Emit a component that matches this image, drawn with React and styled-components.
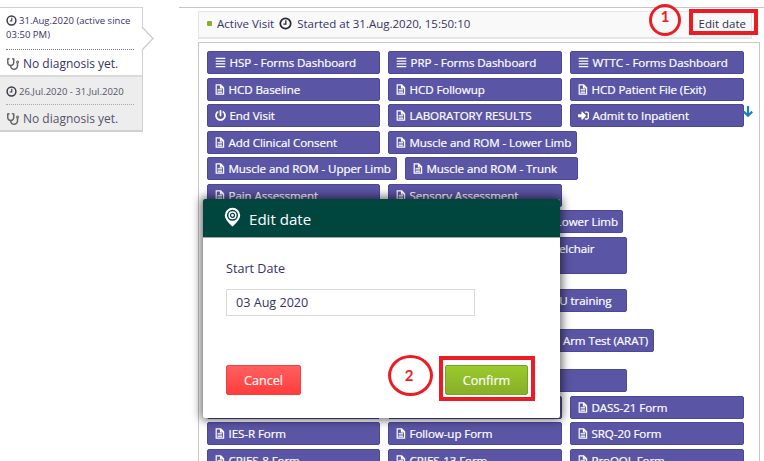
import React from "react";
import styled, { createGlobalStyle, css } from "styled-components";
import { FaAlignJustify, FaPowerOff, FaSignInAlt, FaStethoscope } from "react-icons/fa";

const GlobalStyle = createGlobalStyle`
  * { box-sizing: border-box; }
  body {
    margin: 0;
    background: #fff;
    color: #363463;
    font-family: "Open Sans", sans-serif;
    overflow: hidden;
  }
`;

const Page = styled.div`
  position: relative;
  display: flex;
  align-items: flex-start;
  width: 764px;
  height: 461px;
  padding-top: 7px;
  overflow: hidden;
`;

const Sidebar = styled.aside`
  position: relative;
  flex: 0 0 143px;
  margin-right: 36px;
  height: 125px;
  border: solid #d0d0d0;
  border-width: 1px 1px 2px 0;
`;

const VisitEntry = styled.section`
  height: ${(p) => (p.$past ? 55 : 67)}px;
  padding: ${(p) => (p.$past ? 8 : 6)}px 8px 0 6px;
  background: ${(p) => (p.$past ? "#ededed" : "#fff")};
  color: ${(p) => (p.$past ? "#55546a" : "#363463")};
  ${(p) => p.$past && css`border-top: 2px solid #dadada;`}
`;

const VisitDate = styled.div`
  height: ${(p) => (p.$past ? 20 : 36)}px;
  border-bottom: ${(p) => (p.$past ? "1px dotted #aaa" : "1px dotted #777")};
  font-size: 9.5px;
  line-height: 14.3px;
  letter-spacing: ${(p) => p.$spacing}px;
  white-space: nowrap;
  svg {
    width: 11px;
    height: 11px;
    margin-right: 2px;
    vertical-align: -2px;
    color: #3b3b48;
  }
`;

const Diagnosis = styled.div`
  display: flex;
  align-items: center;
  height: 27px;
  padding-left: 1px;
  font-size: 12px;
  white-space: nowrap;
  svg {
    width: 12px;
    height: 12px;
    margin-right: 4px;
    color: #666;
  }
`;

const SidebarPointer = styled.svg`
  position: absolute;
  left: 141px;
  top: 18px;
  width: 14px;
  height: 25px;
`;

const Main = styled.main`
  flex: 1;
  height: 454px;
  padding: 3px 4px 0 19px;
  border-top: 1px solid #c5c5c5;
`;

const VisitHeader = styled.header`
  display: flex;
  align-items: center;
  width: 554px;
  height: 28px;
  padding: 0 5px 2px 8px;
  border: 1px solid #e6e6e6;
  border-bottom-width: 2px;
  background: #f9f9f9;
  font-size: 11.5px;
  white-space: nowrap;
  svg {
    width: 13px;
    height: 13px;
    margin: 0 5px;
    color: #282833;
  }
`;

const ActiveDot = styled.i`
  width: 5px;
  height: 5px;
  margin-right: 5px;
  border-radius: 1px;
  background: #88af28;
`;

const EditLink = styled.a`
  margin-left: auto;
  color: #303047;
`;

const FormsPanel = styled.section`
  position: relative;
  width: 562px;
  height: 440px;
  margin-top: 3px;
  padding: 8px 0 0 8px;
  border: 1px solid #c8c8c8;
  border-bottom: 0;
`;

const FormRow = styled.div`
  display: flex;
  align-items: flex-start;
  gap: 8px;
  height: ${(p) => p.$height}px;
`;

const FormButton = styled.button`
  flex: none;
  display: flex;
  align-items: center;
  justify-content: ${(p) => (p.$end ? "flex-end" : "flex-start")};
  width: ${(p) => p.$width}px;
  height: ${(p) => (p.$tall ? 37.5 : 23)}px;
  padding: 0 ${(p) => (p.$end || 0)}px ${(p) => (p.$tall ? 14 : 0)}px ${(p) => (p.$end ? 0 : 6.5)}px;
  border: 1px solid #4d4798;
  border-radius: 2px;
  background: #5b55a5;
  color: #fff;
  font: 11.6px "Open Sans", sans-serif;
  -webkit-text-stroke: 0.2px #fff;
  letter-spacing: -0.09px;
  white-space: nowrap;
  svg {
    flex: none;
    height: 11px;
    margin-right: 4px;
  }
`;

const ScrollArrow = styled.svg`
  position: absolute;
  left: 544px;
  top: 63px;
  width: 10px;
  height: 12px;
`;

const Dialog = styled.section`
  position: absolute;
  left: 203px;
  top: 199px;
  width: 357px;
  height: 219px;
  background: #fff;
  border-radius: 2px;
  box-shadow: 0 0 10px 2px rgba(0, 0, 0, 0.6);
`;

const DialogTitle = styled.h3`
  display: flex;
  align-items: center;
  height: 39px;
  margin: 0;
  padding: 2px 0 0 21px;
  border-bottom: 1px solid #a5a5a5;
  border-radius: 2px 2px 0 0;
  background: #00463f;
  color: #fff;
  font-size: 15.1px;
  font-weight: 400;
  svg {
    width: 17px;
    height: 20px;
    margin: -5px 8px 0 0;
  }
`;

const DialogBody = styled.div`
  padding: 22px 24px 0 23px;
`;

const FieldLabel = styled.label`
  display: block;
  height: 29px;
  font-size: 12.6px;
  line-height: 18px;
`;

const DateInput = styled.div`
  width: 249px;
  height: 27px;
  padding-left: 9px;
  border: 1px solid #d9d9d9;
  font-size: 12.6px;
  line-height: 25px;
`;

const Actions = styled.div`
  display: flex;
  justify-content: space-between;
  width: 302px;
  margin-top: 49px;
`;

const ActionButton = styled.button`
  width: ${(p) => (p.$confirm ? 83 : 75)}px;
  height: 30px;
  padding: 0;
  border: 1px solid ${(p) => (p.$confirm ? "#78a521" : "#f04141")};
  border-radius: 2px;
  background: ${(p) =>
    p.$confirm ? "linear-gradient(#9aca2d, #88af28)" : "linear-gradient(#ff6060, #ff3d3d)"};
  color: #fff;
  font: 12.6px "Open Sans", sans-serif;
  -webkit-text-stroke: 0.15px #fff;
`;

const Highlight = styled.div`
  position: absolute;
  left: ${(p) => p.$x}px;
  top: ${(p) => p.$y}px;
  width: ${(p) => p.$w}px;
  height: ${(p) => p.$h}px;
  border: 4px solid #ed1c24;
`;

const StepMarker = styled(Highlight)`
  display: flex;
  justify-content: center;
  padding-top: ${(p) => p.$shift}px;
  padding-right: ${(p) => p.$nudge || 0}px;
  border-width: 3px;
  border-radius: 50%;
  color: #ed1c24;
  font: bold 15px/18px Lato, sans-serif;
`;

const FileIcon = () => (
  <svg width="10" height="11" viewBox="0 0 10 11" fill="none" stroke="currentColor">
    <path d="M1.2.8h4.5l2.9 3v6.4H1.2zM5.5.8v3.1h3.1" strokeWidth="1.2" />
    <path d="M2.6 5.4h4.6M2.6 7h4.6M2.6 8.6h4.6" strokeWidth=".9" />
  </svg>
);

const ClockIcon = () => (
  <svg viewBox="0 0 12 12" fill="none" stroke="currentColor" strokeWidth="1.6">
    <circle cx="6" cy="6" r="4.8" />
    <path d="M6.3 3v3.5H4" strokeWidth="1.2" />
  </svg>
);

const MarkerIcon = () => (
  <svg viewBox="0 0 17 20">
    <path d="M8.5.8A7.7 7.7 0 0 0 .8 8.4C.8 13 8.5 19.5 8.5 19.5S16.2 13 16.2 8.4A7.7 7.7 0 0 0 8.5.8Z" fill="#fff" />
    <circle cx="8.5" cy="8.3" r="4.8" fill="none" stroke="#00463f" strokeWidth="1.5" />
    <circle cx="8.5" cy="8.3" r="2" fill="none" stroke="#00463f" strokeWidth="1.2" />
  </svg>
);

const icons = {
  file: <FileIcon />,
  bars: <FaAlignJustify size={11} />,
  power: <FaPowerOff size={11} />,
  enter: <FaSignInAlt size={11} />,
};

const form = (label, width, icon = "file") => ({ label, width, icon });

const rows = [
  { height: 26.5, items: [form("HSP - Forms Dashboard", 173, "bars"), form("PRP - Forms Dashboard", 174, "bars"), form("WTTC - Forms Dashboard", 174, "bars")] },
  { height: 26.5, items: [form("HCD Baseline", 173), form("HCD Followup", 174), form("HCD Patient File (Exit)", 174)] },
  { height: 26.5, items: [form("End Visit", 173, "power"), form("LABORATORY RESULTS", 174), form("Admit to Inpatient", 174, "enter")] },
  { height: 26.5, items: [form("Add Clinical Consent", 173), form("Muscle and ROM - Lower Limb", 189)] },
  { height: 26.5, items: [form("Muscle and ROM - Upper Limb", 190), form("Muscle and ROM - Trunk", 173)] },
  { height: 26.5, items: [form("Pain Assessment", 173), form("Sensory Assessment", 174)] },
  { height: 26.5, items: [{ ...form("Lower Limb", 416), end: 4 }] },
  { height: 52, items: [{ ...form("Wheelchair", 419.5), end: 31, tall: true }] },
  { height: 40.5, items: [{ ...form("ICU training", 419.5), end: 14 }] },
  { height: 40, items: [{ ...form("Arm Test (ARAT)", 447), end: 5 }] },
  { height: 26.5, items: [{ ...form("", 419.5), end: 5 }] },
  { height: 26.5, items: [form("", 173), form("", 174), form("DASS-21 Form", 174)] },
  { height: 26.5, items: [form("IES-R Form", 173), form("Follow-up Form", 174), form("SRQ-20 Form", 174)] },
  { height: 26.5, items: [form("CRIES-8 Form", 173), form("CRIES-13 Form", 174), form("ProQOL Form", 174)] },
];

export default function App() {
  return (
    <Page>
      <GlobalStyle />
      <Sidebar>
        <VisitEntry>
          <VisitDate $spacing={0.03}>
            <ClockIcon />31.Aug.2020 (active since<br />03:50 PM)
          </VisitDate>
          <Diagnosis><FaStethoscope />No diagnosis yet.</Diagnosis>
        </VisitEntry>
        <VisitEntry $past>
          <VisitDate $past $spacing={0}><ClockIcon />26.Jul.2020 - 31.Jul.2020</VisitDate>
          <Diagnosis><FaStethoscope />No diagnosis yet.</Diagnosis>
        </VisitEntry>
        <SidebarPointer viewBox="0 0 14 25">
          <path d="M1 1 12 12.5 1 24" fill="#fff" stroke="#ccc" strokeWidth="1.3" />
        </SidebarPointer>
      </Sidebar>
      <Main>
        <VisitHeader>
          <ActiveDot />
          <span>Active Visit</span>
          <ClockIcon />
          <span>Started at 31.Aug.2020, 15:50:10</span>
          <EditLink>Edit date</EditLink>
        </VisitHeader>
        <FormsPanel>
          {rows.map((row, i) => (
            <FormRow key={i} $height={row.height}>
              {row.items.map((item, j) => (
                <FormButton key={j} $width={item.width} $end={item.end} $tall={item.tall}>
                  {!item.end && icons[item.icon]}
                  {item.label}
                </FormButton>
              ))}
            </FormRow>
          ))}
          <ScrollArrow viewBox="0 0 10 12" fill="none" stroke="#1c7fc4" strokeWidth="2.2">
            <path d="M5 0v10M.8 5.6 5 9.8l4.2-4.2" />
          </ScrollArrow>
        </FormsPanel>
      </Main>
      <Dialog>
        <DialogTitle><MarkerIcon />Edit date</DialogTitle>
        <DialogBody>
          <FieldLabel>Start Date</FieldLabel>
          <DateInput>03 Aug 2020</DateInput>
          <Actions>
            <ActionButton>Cancel</ActionButton>
            <ActionButton $confirm>Confirm</ActionButton>
          </Actions>
        </DialogBody>
      </Dialog>
      <Highlight $x={689} $y={9} $w={69} $h={26} />
      <Highlight $x={439} $y={356} $w={96} $h={45} />
      <StepMarker $x={649} $y={4} $w={32} $h={32} $shift={0}>1</StepMarker>
      <StepMarker $x={388} $y={355} $w={45} $h={41} $shift={8} $nudge={3}>2</StepMarker>
    </Page>
  );
}
